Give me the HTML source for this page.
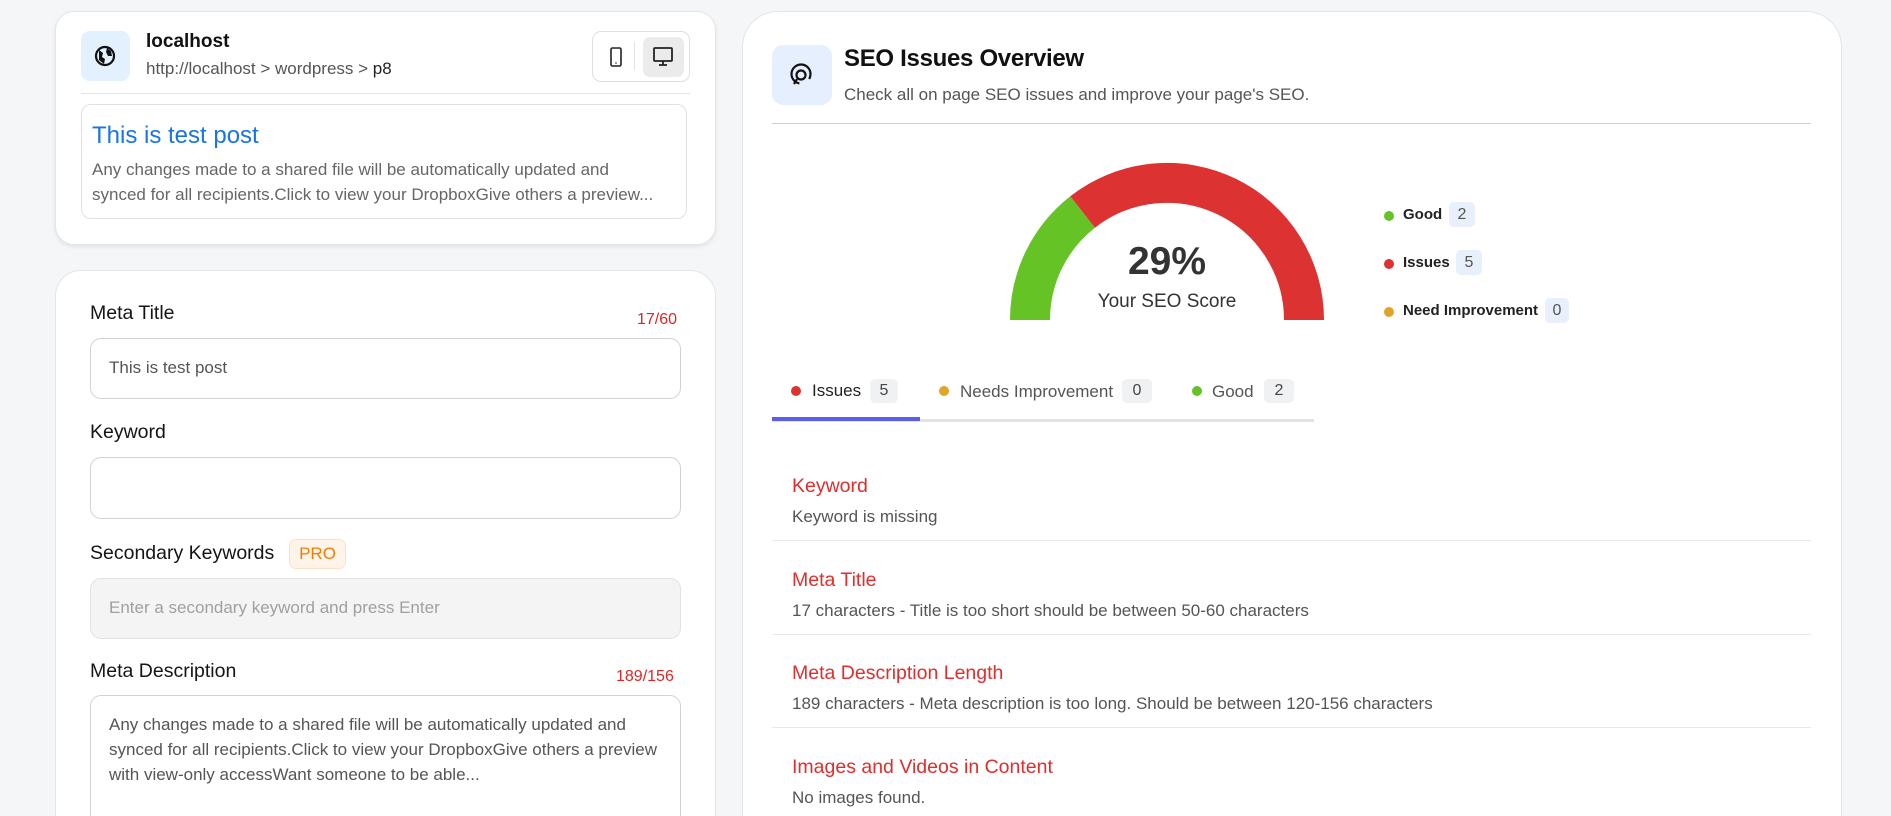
<!DOCTYPE html>
<html><head><meta charset="utf-8"><style>
*{box-sizing:border-box;margin:0;padding:0}
html,body{width:1891px;height:816px;overflow:hidden}
body{background:#f5f6f8;font-family:"Liberation Sans",sans-serif;color:#111}
#w{position:relative;width:1891px;height:816px;overflow:hidden}
.a{position:absolute;white-space:nowrap}
.card{position:absolute;background:#fff;border:1px solid #e3e5e8}
.lbl{font-size:19.5px;font-weight:500;color:#151515}
.cnt{font-size:16px;color:#dc2626}
.inp{position:absolute;left:90px;width:591px;border:1.5px solid #cfd2d6;border-radius:11px;background:#fff;font-size:17px;color:#555;padding-left:18px}
.it{font-size:19.5px;color:#e02d2d;font-weight:500}
.ds{font-size:17px;color:#555}
.sep{position:absolute;left:772px;width:1039px;height:1px;background:#e7e8ea}
.dot{position:absolute;width:10px;height:10px;border-radius:50%}
.bd{position:absolute;height:25px;background:#e8f0fb;border-radius:5px;font-size:16px;color:#555;text-align:center;line-height:25px}
.tb{position:absolute;height:24px;background:#f0f1f3;border-radius:5px;font-size:16px;color:#444;text-align:center;line-height:24px}
</style></head><body><div id="w">

<div class="card" style="left:55px;top:11px;width:661px;height:234px;border-radius:19px;box-shadow:0 2px 4px rgba(0,0,0,.08)"></div>
<div class="a" style="left:81px;top:31px;width:49px;height:50px;background:#e3f0fd;border-radius:9px"></div>
<svg class="a" style="left:93px;top:44px" width="24" height="24" viewBox="0 0 24 24"><circle cx="12" cy="12" r="9" fill="none" stroke="#111" stroke-width="2.2"/><path d="M6 6 L10 9 L9 13 L12 15 L11 20 L6 16 Z M14 4 L18 7 L19 12 L15 12 L13 8 Z" fill="#111"/></svg>
<div class="a" style="left:146px;top:31px;font-size:19px;font-weight:700">localhost</div>
<div class="a" style="left:146px;top:59px;font-size:17px;color:#555">http://localhost &gt; wordpress &gt; <span style="color:#222">p8</span></div>
<div class="a" style="left:592px;top:31px;width:98px;height:51px;border:1px solid #dcdfe3;border-radius:9px"></div>
<svg class="a" style="left:609px;top:47px" width="14" height="20" viewBox="0 0 14 20"><rect x="2" y="1" width="10" height="18" rx="1.5" fill="none" stroke="#222" stroke-width="1.6"/><circle cx="7" cy="16" r=".8" fill="#222"/></svg>
<div class="a" style="left:634px;top:42px;width:1px;height:28px;background:#e3e3e3"></div>
<div class="a" style="left:643px;top:37px;width:41px;height:40px;background:#ebebeb;border-radius:7px"></div>
<svg class="a" style="left:652px;top:47px" width="22" height="20" viewBox="0 0 22 20"><rect x="2" y="1" width="18" height="13" rx="1" fill="none" stroke="#222" stroke-width="1.8"/><path d="M11 14v4M7 18h8" stroke="#222" stroke-width="1.8"/></svg>
<div class="a" style="left:81px;top:93px;width:609px;height:1px;background:#e2e4e7"></div>
<div class="a" style="left:81px;top:104px;width:606px;height:115px;border:1px solid #dfe1e4;border-radius:10px"></div>
<div class="a" style="left:92px;top:122px;font-size:24px;color:#1a73e8">This is test post</div>
<div class="a" style="left:92px;top:157px;font-size:17px;color:#666;line-height:25px">Any changes made to a shared file will be automatically updated and<br>synced for all recipients.Click to view your DropboxGive others a preview...</div>

<div class="card" style="left:55px;top:270px;width:661px;height:600px;border-radius:26px"></div>
<div class="a lbl" style="left:90px;top:302px">Meta Title</div>
<div class="a cnt" style="left:637px;top:311px">17/60</div>
<div class="inp" style="top:338px;height:61px;line-height:58px">This is test post</div>
<div class="a lbl" style="left:90px;top:421px">Keyword</div>
<div class="inp" style="top:457px;height:62px"></div>
<div class="a lbl" style="left:90px;top:542px">Secondary Keywords</div>
<div class="a" style="left:289px;top:539px;width:57px;height:30px;background:#fff4ea;border:1px solid #fde0c4;border-radius:7px;color:#f57c00;font-size:17px;text-align:center;line-height:28px">PRO</div>
<div class="inp" style="top:578px;height:61px;line-height:58px;background:#f4f4f4;color:#a0a0a0;border-color:#e2e2e2">Enter a secondary keyword and press Enter</div>
<div class="a lbl" style="left:90px;top:660px">Meta Description</div>
<div class="a cnt" style="left:616px;top:668px">189/156</div>
<div class="inp" style="top:695px;height:140px;padding-top:16px;line-height:25px;white-space:normal">Any changes made to a shared file will be automatically updated and synced for all recipients.Click to view your DropboxGive others a preview with view-only accessWant someone to be able...</div>

<div class="card" style="left:742px;top:11px;width:1100px;height:880px;border-radius:36px"></div>
<div class="a" style="left:772px;top:45px;width:60px;height:60px;background:#e6effd;border-radius:11px"></div>
<svg class="a" style="left:788px;top:62px" width="26" height="26" viewBox="0 0 26 26"><circle cx="13" cy="12" r="9.5" fill="none" stroke="#111" stroke-width="2.2" stroke-dasharray="48 12" transform="rotate(100 13 12)"/><circle cx="13" cy="13" r="4.5" fill="none" stroke="#111" stroke-width="2.2"/><path d="M9 17l-3 5" stroke="#111" stroke-width="2.2"/></svg>
<div class="a" style="left:844px;top:45px;font-size:24px;font-weight:700;letter-spacing:-.3px">SEO Issues Overview</div>
<div class="a" style="left:844px;top:85px;font-size:17px;color:#555">Check all on page SEO issues and improve your page's SEO.</div>
<div class="a" style="left:772px;top:123px;width:1039px;height:1px;background:#cfd1d4"></div>

<svg class="a" style="left:1000px;top:150px" width="340" height="180" viewBox="0 0 340 180"><path d="M30 170 A137 137 0 0 1 82.6 62" fill="none" stroke="#65c325" stroke-width="40"/><path d="M82.6 62 A137 137 0 0 1 304 170" fill="none" stroke="#dc3232" stroke-width="40"/></svg>
<div class="a" style="left:1067px;top:240px;width:200px;text-align:center;font-size:39px;font-weight:700;color:#333">29%</div>
<div class="a" style="left:1067px;top:291px;width:200px;text-align:center;font-size:19px;color:#333">Your SEO Score</div>

<div class="dot" style="left:1384px;top:211px;background:#65c325"></div>
<div class="a" style="left:1403px;top:206px;font-size:15px;font-weight:700;color:#222">Good</div>
<div class="bd" style="left:1449px;top:202px;width:26px">2</div>
<div class="dot" style="left:1384px;top:259px;background:#dc3232"></div>
<div class="a" style="left:1403px;top:254px;font-size:15px;font-weight:700;color:#222">Issues</div>
<div class="bd" style="left:1456px;top:250px;width:26px">5</div>
<div class="dot" style="left:1384px;top:307px;background:#e0a528"></div>
<div class="a" style="left:1403px;top:302px;font-size:15px;font-weight:700;color:#222">Need Improvement</div>
<div class="bd" style="left:1545px;top:298px;width:24px">0</div>

<div class="dot" style="left:791px;top:386px;background:#dc3232"></div>
<div class="a" style="left:812px;top:381px;font-size:17px;color:#222">Issues</div>
<div class="tb" style="left:870px;top:379px;width:28px">5</div>
<div class="dot" style="left:939px;top:386px;background:#e0a528"></div>
<div class="a" style="left:960px;top:382px;font-size:17px;color:#555">Needs Improvement</div>
<div class="tb" style="left:1122px;top:379px;width:30px">0</div>
<div class="dot" style="left:1192px;top:386px;background:#65c325"></div>
<div class="a" style="left:1212px;top:382px;font-size:17px;color:#555">Good</div>
<div class="tb" style="left:1264px;top:379px;width:30px">2</div>
<div class="a" style="left:772px;top:419px;width:542px;height:3px;background:#e3e3e3"></div>
<div class="a" style="left:772px;top:417px;width:148px;height:4px;background:#5b5fe6"></div>

<div class="a it" style="left:792px;top:475px">Keyword</div>
<div class="a ds" style="left:792px;top:507px">Keyword is missing</div>
<div class="sep" style="top:540px"></div>
<div class="a it" style="left:792px;top:569px">Meta Title</div>
<div class="a ds" style="left:792px;top:601px">17 characters - Title is too short should be between 50-60 characters</div>
<div class="sep" style="top:634px"></div>
<div class="a it" style="left:792px;top:662px">Meta Description Length</div>
<div class="a ds" style="left:792px;top:694px">189 characters - Meta description is too long. Should be between 120-156 characters</div>
<div class="sep" style="top:727px"></div>
<div class="a it" style="left:792px;top:756px">Images and Videos in Content</div>
<div class="a ds" style="left:792px;top:788px">No images found.</div>
</div></body></html>
